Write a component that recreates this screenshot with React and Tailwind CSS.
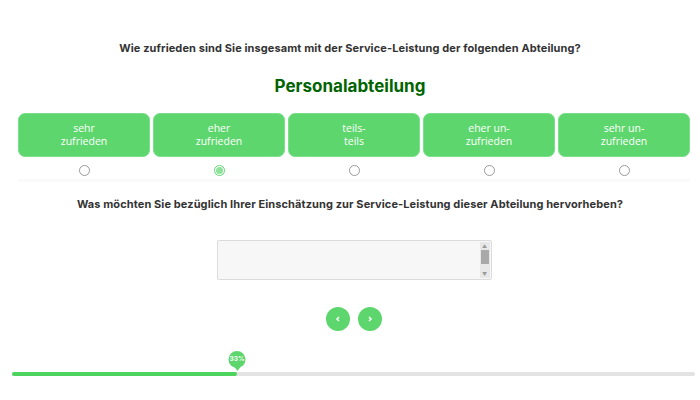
import React, { useState } from "react";

const options = [
    ["sehr", "zufrieden"],
    ["eher", "zufrieden"],
    ["teils-", "teils"],
    ["eher un-", "zufrieden"],
    ["sehr un-", "zufrieden"],
];

const App = () => {
    const [selected, setSelected] = useState(1);
    const progress = 33;

    return (
        <div className="w-[700px] h-[400px] bg-white flex flex-col items-center font-['Inter',sans-serif] text-[#333]">
            <h2 className="mt-[40px] text-[11px] font-bold tracking-[0.1px] text-[#333]">
                Wie zufrieden sind Sie insgesamt mit der Service-Leistung der folgenden Abteilung?
            </h2>
            <h1 className="mt-[18px] text-[17px] font-bold text-[#006400] leading-[22px]">
                Personalabteilung
            </h1>

            {/* Antwortskala */}
            <div className="mt-[16px] w-[672px] ml-[8px] self-start pl-[10px] box-content">
                <div className="grid grid-cols-5 gap-[3px]">
                    {options.map((o, i) => (
                        <div key={i} className="flex flex-col items-center">
                            <button
                                onClick={() => setSelected(i)}
                                className="w-full h-[44px] rounded-[7px] bg-[#5dd66d] border border-[#7ae08a] text-white text-[10.5px] leading-[13px] font-['Open_Sans',sans-serif] flex flex-col items-center justify-center"
                            >
                                <span>{o[0]}</span>
                                <span>{o[1]}</span>
                            </button>
                            <span
                                onClick={() => setSelected(i)}
                                className={
                                    "mt-[8px] w-[11px] h-[11px] rounded-full border flex items-center justify-center " +
                                    (selected === i ? "border-[#5dd66d]" : "border-[#999]")
                                }
                            >
                                {selected === i && <span className="w-[7px] h-[7px] rounded-full bg-[#8ee29a]" />}
                            </span>
                        </div>
                    ))}
                </div>
                <div className="mt-[3px] h-[3px] bg-[#fafafa]" />
            </div>

            <h2 className="mt-[14px] text-[11px] font-bold tracking-[0.1px] text-[#333]">
                Was möchten Sie bezüglich Ihrer Einschätzung zur Service-Leistung dieser Abteilung hervorheben?
            </h2>

            {/* Textfeld */}
            <div className="mt-[28px] ml-[8px] w-[275px] h-[40px] border border-[#dcdcdc] bg-[#f7f7f7] flex rounded-[2px]">
                <textarea className="flex-1 resize-none bg-transparent outline-none text-[11px] p-1" />
                <div className="w-[10px] my-[1px] mr-[1px] bg-[#e8e8e8] flex flex-col items-center">
                    <span className="text-[5px] leading-[8px] text-[#999]">▲</span>
                    <span className="w-[8px] flex-1 bg-[#a9a9a9]" />
                    <span className="text-[5px] leading-[8px] text-[#999] mt-[6px]">▼</span>
                </div>
            </div>

            {/* Navigation */}
            <div className="mt-[27px] ml-[8px] flex gap-[8px]">
                <button className="w-[24px] h-[24px] rounded-full bg-[#5dd66d] flex items-center justify-center">
                    <svg width="6" height="6" viewBox="0 0 6 6">
                        <path d="M4 1 L2 3 L4 5" stroke="white" strokeWidth="1.5" fill="none" />
                    </svg>
                </button>
                <button className="w-[24px] h-[24px] rounded-full bg-[#5dd66d] flex items-center justify-center">
                    <svg width="6" height="6" viewBox="0 0 6 6">
                        <path d="M2 1 L4 3 L2 5" stroke="white" strokeWidth="1.5" fill="none" />
                    </svg>
                </button>
            </div>

            {/* Fortschritt */}
            <div className="mt-[20px] w-[683px] self-start ml-[12px]">
                <div className="relative h-[21px]">
                    <div
                        className="absolute top-0 -translate-x-1/2 flex flex-col items-center"
                        style={{ left: `${(225 / 683) * 100}%` }}
                    >
                        <div className="w-[17px] h-[17px] rounded-full bg-[#5dd66d] flex items-center justify-center text-white text-[6.5px] font-bold">
                            {progress}%
                        </div>
                        <div className="w-0 h-0 border-l-[3px] border-r-[3px] border-t-[4px] border-l-transparent border-r-transparent border-t-[#5dd66d] -mt-[1px]" />
                    </div>
                </div>
                <div className="h-[4px] rounded-full bg-[#e3e3e3]">
                    <div className="h-full rounded-full bg-[#4cd45e]" style={{ width: `${(225 / 683) * 100}%` }} />
                </div>
            </div>
        </div>
    );
};

export default App;
